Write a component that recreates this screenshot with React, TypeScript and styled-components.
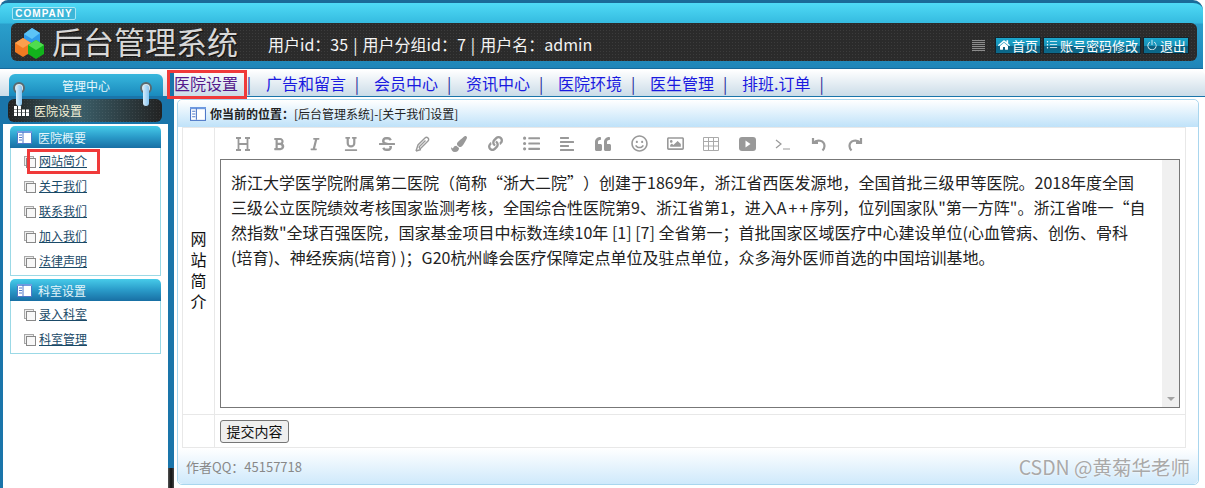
import React from 'react';
import styled, { createGlobalStyle } from 'styled-components';
import { FaHome, FaBold, FaItalic, FaUnderline, FaStrikethrough, FaPaintBrush, FaLink, FaListUl, FaAlignLeft, FaQuoteLeft, FaRegSmile, FaRegImage } from 'react-icons/fa';
import { BsPower, BsListUl } from 'react-icons/bs';

const GlobalStyle = createGlobalStyle`
  html, body { margin: 0; padding: 0; background: #fff; }
  body { font-family: "Noto Sans CJK SC", "Liberation Sans", sans-serif; text-spacing-trim: space-all; }
  * { box-sizing: border-box; }
`;

const Page = styled.div`
  position: relative;
  width: 1205px;
  height: 488px;
  overflow: hidden;
  display: flex;
  flex-direction: column;
`;

const Header = styled.header`
  height: 69px;
  margin-right: 2px;
  padding: 20px 6px 0 11px;
  border-top: 3px solid #1b6a98;
  border-bottom: 1px solid #176a9c;
  border-radius: 8px 10px 0 0;
  background: linear-gradient(#4fdaf6 0, #35bbe0 20px, #2a9fcb 21px, #1f85b8 100%);
`;

const HeadBar = styled.div`
  height: 38px;
  display: flex;
  align-items: center;
  border-radius: 6px;
  padding: 0 8px 0 3px;
  background-color: #2b2b2b;
  background-image: radial-gradient(#3c3c3c 1px, transparent 1px);
  background-size: 3px 3px;
`;

const Company = styled.div`
  position: absolute;
  top: 7px;
  left: 12px;
  width: 64px;
  height: 13px;
  border: 1px solid #a5e6f5;
  border-radius: 2px;
  background: #3cb6d8;
  color: #fff;
  font: bold 10px/11px "Liberation Sans", sans-serif;
  letter-spacing: 1px;
  text-align: center;
`;

const Title = styled.div`
  margin: -2px 0 0 7px;
  font-size: 31px;
  line-height: 38px;
  color: #d8d8d8;
  text-shadow: 1px 1px 1px #111;
`;

const UserInfo = styled.div`
  margin: 4px 0 0 30px;
  font-size: 16px;
  word-spacing: 1.5px;
  color: #f4f4f4;
  white-space: pre;
`;

const HeadActions = styled.div`
  margin-left: auto;
  padding-top: 6px;
  display: flex;
  align-items: center;
  gap: 2px;
`;

const Grip = styled.div`
  width: 13px;
  height: 11px;
  margin-right: 8px;
  background: repeating-linear-gradient(#8c8c8c 0 1px, #333 1px 2px);
`;

const HeadButton = styled.a`
  height: 17px;
  padding: 0 2px;
  display: flex;
  align-items: center;
  gap: 2px;
  font-size: 13px;
  line-height: 17px;
  color: #fff;
  border: 1px solid #14242c;
  background: linear-gradient(#1ba6cc 0, #1892b8 50%, #0b5f80 52%, #0c6a8c 100%);
  white-space: nowrap;
`;

const Body = styled.div`
  flex: 1;
  display: flex;
  min-height: 0;
  margin-top: 1px;
`;

const Sidebar = styled.aside`
  position: relative;
  width: 174px;
  flex: none;
  padding: 4px 0 0 3px;
  border-right: 6px solid #1a75aa;
  background:
    linear-gradient(#fff, #cbdce8) top / 100% 26px no-repeat,
    linear-gradient(#1a75aa, #1a75aa) 0 26px / 100% 28px no-repeat,
    linear-gradient(#1a75aa, #1a75aa) left / 3px 100% no-repeat,
    #fff;

  &::after {
    content: '';
    position: absolute;
    right: -6px;
    bottom: 0;
    width: 6px;
    height: 20px;
    background: linear-gradient(90deg, #555, #111 50%, #444);
  }
`;

const SideTitle = styled.div`
  position: relative;
  z-index: 1;
  height: 22px;
  margin: 0 5px 0 6px;
  border-radius: 6px 6px 0 0;
  background: linear-gradient(#38b7dd, #1a8abd);
  color: #e8f8fc;
  font-size: 12px;
  line-height: 23px;
  text-align: center;
`;

const Ring = styled.span<{ $left: number }>`
  position: absolute;
  top: 8px;
  left: ${p => p.$left}px;
  width: 12px;
  height: 12px;
  border: 2px solid #5a6a70;
  border-radius: 50%;
  background: #dfe8ec;

  &::after {
    content: '';
    position: absolute;
    top: 1px;
    left: 1px;
    width: 6px;
    height: 21px;
    border-radius: 3px;
    background: linear-gradient(90deg, #d5ecfb, #86c3ef);
  }
`;

const ActiveBar = styled.div`
  height: 23px;
  margin: 3px 6px 0 5px;
  display: flex;
  align-items: center;
  gap: 5px;
  padding-left: 6px;
  border-radius: 6px;
  background:
    radial-gradient(rgba(255, 255, 255, 0.07) 1px, transparent 1px) 0 0 / 3px 3px,
    linear-gradient(90deg, #222 0, #3b5f6a 45%, #222 100%);
  color: #f6f2d8;
  font-size: 12px;
`;

const MenuGroup = styled.section<{ $first?: boolean }>`
  margin: ${p => (p.$first ? '4px' : '3px')} 7px 0 7px;
`;

const MenuHead = styled.div`
  height: 22px;
  display: flex;
  align-items: center;
  gap: 6px;
  padding-left: 7px;
  border-radius: 5px 5px 0 0;
  background: linear-gradient(#46cbe9 0, #2a9bc9 50%, #186fa4 100%);
  color: #e4f5fa;
  font-size: 12px;
`;

const MenuList = styled.ul`
  list-style: none;
  margin: 0;
  padding: 0 0 2px;
  border: 1px solid #9bd9e6;
  border-top: 0;
`;

const MenuItem = styled.li`
  height: 25px;
  display: flex;
  align-items: center;
  gap: 5px;
  padding-left: 13px;
  font-size: 12px;

  a { color: #1a4a68; text-decoration: underline; }
`;

const PageIcon = styled.span`
  position: relative;
  width: 10px;
  height: 10px;
  border: 1px solid #a8a8a8;
  background: #eee;

  &::after {
    content: '';
    position: absolute;
    left: 1px;
    top: 1px;
    width: 8px;
    height: 8px;
    border: 1px solid #888;
    background: #f8f8f8;
  }
`;

const Main = styled.main`
  flex: 1;
  min-width: 0;
  display: flex;
  flex-direction: column;
`;

const Nav = styled.nav`
  height: 27px;
  margin-left: -6px;
  display: flex;
  align-items: center;
  padding-bottom: 1px;
  border-bottom: 1px solid #1a75aa;
  border-radius: 0 6px 0 0;
  background: linear-gradient(#fff, #cbdce8);
`;

const NavGrip = styled.span`
  width: 6px;
  height: 14px;
  background: repeating-linear-gradient(#aaa 0 1px, transparent 1px 2px);
`;

const NavLink = styled.a<{ $visited?: boolean }>`
  font-size: 16px;
  line-height: 22px;
  white-space: nowrap;
  color: ${p => (p.$visited ? '#551a8b' : '#1a1ae0')};
`;

const NavSep = styled.span`
  width: 28px;
  padding-right: 6px;
  text-align: center;
  font-size: 16px;
  color: #2a2a9a;
`;

const Panel = styled.div`
  flex: 1;
  margin: 2px 6px 3px 3px;
  display: flex;
  flex-direction: column;
  border: 1px solid #a9d6ee;
  border-radius: 5px;
  background: #fff;
`;

const Crumbs = styled.div`
  height: 27px;
  flex: none;
  display: flex;
  align-items: center;
  padding-left: 12px;
  border-radius: 5px 5px 0 0;
  background: linear-gradient(#fff, #bfe2f9);
  font-size: 12px;
  color: #222;

  b { margin: 0 0 0 4px; }
`;

const FormTable = styled.div`
  flex: 1;
  margin: 0 12px 0 4px;
  display: grid;
  grid-template-columns: 32px 1fr;
  grid-template-rows: 1fr 33px;
  border: 1px solid #e8e8e8;
  border-top: 0;
`;

const LabelCell = styled.div`
  display: flex;
  align-items: center;
  justify-content: center;
  padding-bottom: 2px;
  border-right: 1px solid #e8e8e8;
  border-top: 1px solid #e8e8e8;
  font-size: 16px;
  line-height: 21px;
  color: #111;
  text-align: center;
`;

const FieldCell = styled.div`
  display: flex;
  flex-direction: column;
  padding: 0 5px 6px;
  border-top: 1px solid #e8e8e8;
`;

const Toolbar = styled.div`
  height: 31px;
  flex: none;
  display: flex;
  align-items: center;
  padding-left: 5px;
`;

const ToolButton = styled.span`
  width: 36px;
  display: flex;
  justify-content: center;
  align-items: center;
  color: #999;
  font-size: 17px;
`;

const Editor = styled.div`
  flex: 1;
  display: flex;
  border: 1px solid #777;
`;

const EditorText = styled.div`
  flex: 1;
  padding: 10px 10px;
  font-size: 16px;
  line-height: 25px;
  color: #222;
  white-space: nowrap;
`;

const Plus = styled.span`
  letter-spacing: 2px;
`;

const ScrollTrack = styled.div`
  width: 17px;
  flex: none;
  position: relative;
  background: #f0f0f0;

  &::after {
    content: '';
    position: absolute;
    bottom: 6px;
    left: 5px;
    border: 4px solid transparent;
    border-top: 4px solid #a3a3a3;
    border-bottom: 0;
  }
`;

const SubmitCell = styled.div`
  display: flex;
  align-items: center;
  padding: 0 5px;
  border-top: 1px solid #e8e8e8;
`;

const SubmitButton = styled.button`
  width: 69px;
  height: 23px;
  padding: 0;
  border: 1px solid #767676;
  border-radius: 3px;
  background: #efefef;
  font-family: inherit;
  font-size: 14px;
  color: #111;
`;

const Footer = styled.div`
  height: 36px;
  flex: none;
  padding-left: 8px;
  display: flex;
  align-items: center;
  border-radius: 0 0 5px 5px;
  background: linear-gradient(#fff, #cfe9fb);
  font-size: 13px;
  color: #888;
`;

const Watermark = styled.div`
  position: absolute;
  right: 15px;
  bottom: 7px;
  font-size: 19.5px;
  color: #a9a9a9;
  text-shadow: 0 0 2px #fff;
`;

const RedBox = styled.div<{ $x: number; $y: number; $w: number; $h: number }>`
  position: absolute;
  left: ${p => p.$x}px;
  top: ${p => p.$y}px;
  width: ${p => p.$w}px;
  height: ${p => p.$h}px;
  border: 3px solid #f03a3a;
`;

const ColumnsIcon = ({ size = 15 }: { size?: number }) => (
  <svg width={size} height={size - 2} viewBox="0 0 15 13">
    <rect x="0.5" y="0.5" width="14" height="12" fill="#fff" stroke="#4f78c8" />
    <rect x="0" y="0" width="15" height="2" fill="#6f9ae0" />
    <path d="M6 1v11M2 4h3M2 6.5h3M2 9h3" stroke="#4f78c8" fill="none" />
  </svg>
);

const Logo = () => (
  <svg width="31" height="33" viewBox="0 0 31 33">
    <path d="M10 8l8-6 8 5v9l-8 6-8-5z" fill="#2f9bea" />
    <path d="M10 8l8 5 8-6-8-5z" fill="#5cc4f7" />
    <path d="M1 17l8-5 8 5v9l-8 5-8-5z" fill="#f07a22" />
    <path d="M1 17l8 5 8-5-8-5z" fill="#fba04e" />
    <path d="M14 19l8-5 8 5v9l-8 5-8-5z" fill="#12b31c" />
    <path d="M14 19l8 5 8-5-8-5z" fill="#4fdc4f" />
  </svg>
);

const BlockIcon = () => (
  <svg width="15" height="11" viewBox="0 0 15 11" fill="#fff">
    <path d="M0 1h3v3H0zM4 1h3v3H4z" />
    <path d="M0 4.500h3v3H0zM4 4.500h3v3H4zM8 4.500h3v3H8zM12 4.500h3v3h-3z" />
    <path d="M0 8h3v3H0zM4 8h3v3H4zM8 8h3v3H8zM12 8h3v3h-3z" />
  </svg>
);

const Glyph = ({ children }: { children: React.ReactNode }) => (
  <svg width="18" height="18" viewBox="0 0 18 18" fill="none" stroke="currentColor" strokeWidth="1.8">
    {children}
  </svg>
);

const tools: React.ReactNode[] = [
  <Glyph key="h"><path d="M2 3h5M11 3h5M2 15h5M11 15h5M4.500 3v12M13.500 3v12M4.500 9h9" /></Glyph>,
  <FaBold key="b" size={14} />,
  <FaItalic key="i" size={14} />,
  <FaUnderline key="u" size={14} />,
  <FaStrikethrough key="s" size={16} />,
  <Glyph key="e"><path d="M2 16l2-6 7-7c2-2 5 1 3 3l-7 7c-1 1-2.500-.5-1.500-1.500l6-6M2 16l5-1.500" strokeWidth="1.400" /></Glyph>,
  <FaPaintBrush key="p" size={16} />,
  <FaLink key="l" size={15} />,
  <FaListUl key="ul" size={17} />,
  <FaAlignLeft key="al" size={16} />,
  <FaQuoteLeft key="q" size={16} />,
  <FaRegSmile key="sm" size={17} />,
  <FaRegImage key="im" size={17} />,
  <svg key="t" width="16" height="14" viewBox="0 0 16 14" fill="none" stroke="#aaa">
    <path d="M.5.500h15v13H.5zM.5 4.500h15M.5 9h15M5.500.5v13M10.500.5v13" />
  </svg>,
  <svg key="v" width="17" height="14" viewBox="0 0 17 14">
    <rect width="17" height="14" rx="3" fill="currentColor" />
    <path d="M6.500 3.500l5 3.500-5 3.500z" fill="#fff" />
  </svg>,
  <Glyph key="c"><path d="M2 5l5 4-5 4M9 14h7" strokeWidth="1.200" /></Glyph>,
  <Glyph key="ud"><path d="M3 3v5h5M3.500 8c3-4 11-3 11 3 0 2-1 3.500-2 4.500" strokeWidth="2.200" /></Glyph>,
  <Glyph key="rd"><path d="M15 3v5h-5M14.500 8c-3-4-11-3-11 3 0 2 1 3.500 2 4.500" strokeWidth="2.200" /></Glyph>,
];

const navItems = ['广告和留言', '会员中心', '资讯中心', '医院环境', '医生管理', '排班.订单'];
const aboutItems = ['网站简介', '关于我们', '联系我们', '加入我们', '法律声明'];
const deptItems = ['录入科室', '科室管理'];

const Menu: React.FC<{ title: string; items: string[]; first?: boolean }> = ({ title, items, first }) => (
  <MenuGroup $first={first}>
    <MenuHead><ColumnsIcon />{title}</MenuHead>
    <MenuList>
      {items.map(item => (
        <MenuItem key={item}><PageIcon /><a>{item}</a></MenuItem>
      ))}
    </MenuList>
  </MenuGroup>
);

const App: React.FC = () => (
  <Page>
    <GlobalStyle />
    <Header>
      <HeadBar>
        <Logo />
        <Title>后台管理系统</Title>
        <UserInfo>用户id：35 | 用户分组id：7 | 用户名：admin</UserInfo>
        <HeadActions>
          <Grip />
          <HeadButton><FaHome size={12} />首页</HeadButton>
          <HeadButton><BsListUl size={12} />账号密码修改</HeadButton>
          <HeadButton><BsPower size={12} />退出</HeadButton>
        </HeadActions>
      </HeadBar>
    </Header>
    <Company>COMPANY</Company>
    <Body>
      <Sidebar>
        <SideTitle>
          管理中心
          <Ring $left={4} />
          <Ring $left={131} />
        </SideTitle>
        <ActiveBar><BlockIcon />医院设置</ActiveBar>
        <Menu first title="医院概要" items={aboutItems} />
        <Menu title="科室设置" items={deptItems} />
      </Sidebar>
      <Main>
        <Nav>
          <NavGrip />
          <NavLink $visited>医院设置</NavLink>
          <NavSep>|</NavSep>
          {navItems.map(item => (
            <React.Fragment key={item}>
              <NavLink>{item}</NavLink>
              <NavSep>|</NavSep>
            </React.Fragment>
          ))}
        </Nav>
        <Panel>
          <Crumbs>
            <ColumnsIcon size={16} />
            <b>你当前的位置：</b>[后台管理系统]-[关于我们设置]
          </Crumbs>
          <FormTable>
            <LabelCell>网<br />站<br />简<br />介</LabelCell>
            <FieldCell>
              <Toolbar>
                {tools.map((tool, i) => <ToolButton key={i}>{tool}</ToolButton>)}
              </Toolbar>
              <Editor>
                <EditorText>
                  浙江大学医学院附属第二医院（简称“浙大二院”）创建于1869年，浙江省西医发源地，全国首批三级甲等医院。2018年度全国<br />
                  三级公立医院绩效考核国家监测考核，全国综合性医院第9、浙江省第1，进入<Plus>A++</Plus>序列，位列国家队"第一方阵"。浙江省唯一“自<br />
                  然指数"全球百强医院，国家基金项目中标数连续10年 [1] [7] 全省第一；首批国家区域医疗中心建设单位(心血管病、创伤、骨科<br />
                  (培育)、神经疾病(培育) )；G20杭州峰会医疗保障定点单位及驻点单位，众多海外医师首选的中国培训基地。
                </EditorText>
                <ScrollTrack />
              </Editor>
            </FieldCell>
            <LabelCell />
            <SubmitCell><SubmitButton>提交内容</SubmitButton></SubmitCell>
          </FormTable>
          <Footer>作者QQ：45157718</Footer>
        </Panel>
      </Main>
    </Body>
    <RedBox $x={167} $y={70} $w={80} $h={29} />
    <RedBox $x={27} $y={149} $w={73} $h={25} />
    <Watermark>CSDN @黄菊华老师</Watermark>
  </Page>
);

export default App;
